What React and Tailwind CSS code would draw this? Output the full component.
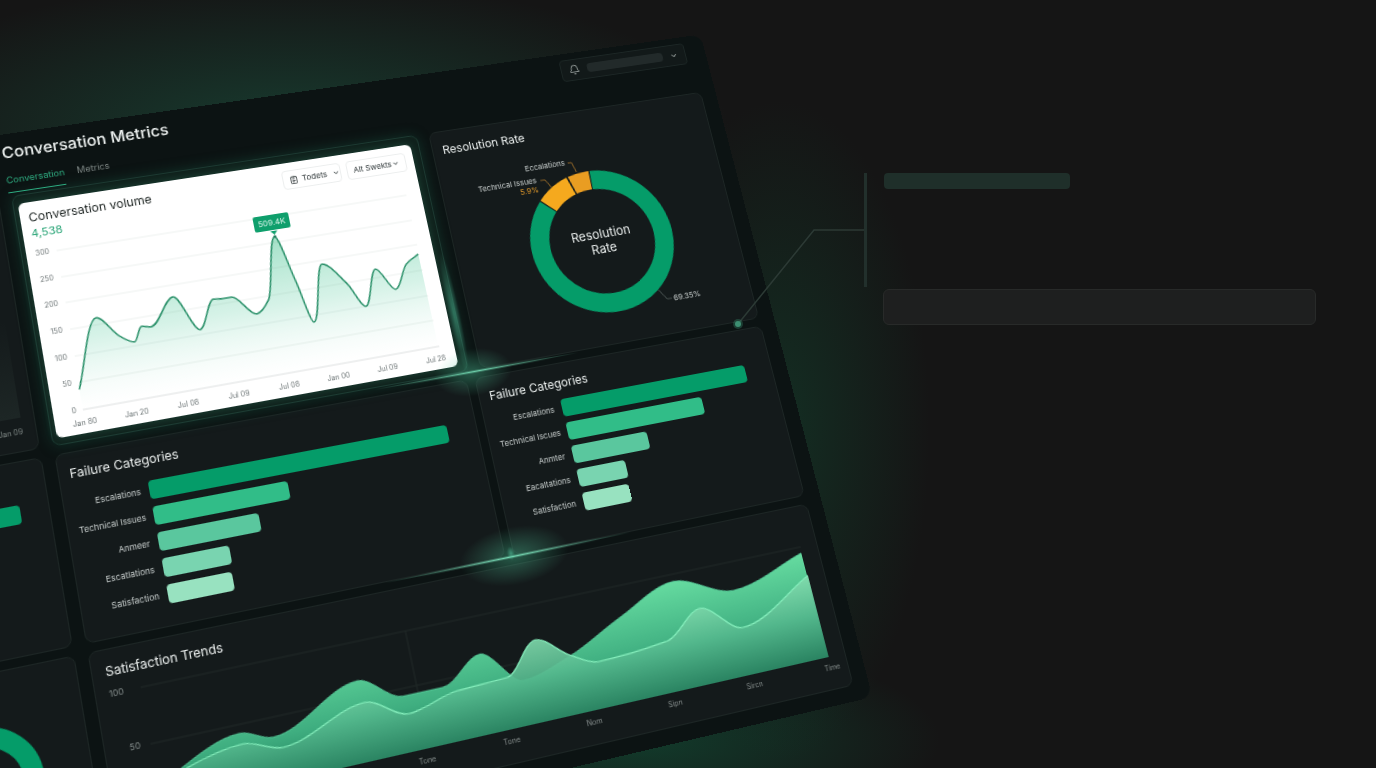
import { Bell, ChevronDown, NotepadText } from "lucide-react";

const volumePoints = [
  [33, 201], [60, 134], [79, 156], [92, 164], [101, 150], [110, 152], [136, 126],
  [156, 163], [174, 135], [183, 136], [192, 136], [213, 157], [227, 145], [245, 82],
  [257, 130], [267, 175], [286, 118], [307, 142], [321, 168], [338, 132], [354, 156],
  [370, 132], [384, 124],
];

const trendBack = [
  [30, 597], [64, 568], [123, 548], [153, 558], [240, 524], [279, 547], [318, 547],
  [360, 524], [396, 557], [446, 544], [504, 518], [565, 495], [623, 516], [702, 494],
];

const trendFront = [
  [34, 598], [71, 568], [124, 558], [160, 569], [243, 545], [281, 564], [331, 553],
  [381, 551], [416, 522], [446, 543], [472, 555], [545, 550], [585, 526], [623, 553],
  [703, 517],
];

const leftBars = [
  { label: "Escalations", width: 294, color: "#059c69" },
  { label: "Technical Issues", width: 130, color: "#31bd88" },
  { label: "Anmeer", width: 97, color: "#5ac79e" },
  { label: "Escatlations", width: 64, color: "#79d4b0" },
  { label: "Satisfaction", width: 62, color: "#98e2c0" },
];

const rightBars = [
  { label: "Escalations", width: 198, color: "#059c69" },
  { label: "Technical Iscues", width: 145, color: "#31bd88" },
  { label: "Anmter", width: 80, color: "#5ac79e" },
  { label: "Eacaltations", width: 51, color: "#79d4b0" },
  { label: "Satisfaction", width: 49, color: "#98e2c0" },
];

const volumeDates = ["Jan 80", "Jan 20", "Jul 08", "Jul 09", "Jul 08", "Jan 00", "Jul 09", "Jul 28"];
const trendTimes = ["Tone", "Tone", "Nom", "Sipn", "Sircn", "Time"];

// monotone cubic through the points
function curve(pts) {
  const n = pts.length;
  const slope = [];
  for (let i = 0; i < n - 1; i++) {
    slope.push((pts[i + 1][1] - pts[i][1]) / (pts[i + 1][0] - pts[i][0]));
  }
  const m = pts.map((_, i) => {
    if (i === 0) return slope[0];
    if (i === n - 1) return slope[n - 2];
    const a = slope[i - 1];
    const b = slope[i];
    return a * b <= 0 ? 0 : (2 * a * b) / (a + b);
  });
  let d = `M${pts[0][0]} ${pts[0][1]}`;
  for (let i = 0; i < n - 1; i++) {
    const h = (pts[i + 1][0] - pts[i][0]) / 3;
    d += ` C${pts[i][0] + h} ${pts[i][1] + m[i] * h} ${pts[i + 1][0] - h} ${pts[i + 1][1] - m[i + 1] * h} ${pts[i + 1][0]} ${pts[i + 1][1]}`;
  }
  return d;
}

function arc(cx, cy, r, from, to) {
  const pt = (deg) => {
    const a = (deg * Math.PI) / 180;
    return `${cx + r * Math.sin(a)} ${cy - r * Math.cos(a)}`;
  };
  return `M${pt(from)} A${r} ${r} 0 ${to - from > 180 ? 1 : 0} 1 ${pt(to)}`;
}

function Card({ className = "", children }) {
  return (
    <section className={`rounded-lg border border-[#1d2625] bg-[#141a1b] ${className}`}>
      {children}
    </section>
  );
}

function CardTitle({ children }) {
  return <h2 className="text-[12px] leading-4 text-[#eef2f1]">{children}</h2>;
}

function FailureCard({ bars, className, listClassName }) {
  return (
    <Card className={`px-[10px] pt-3 ${className}`}>
      <CardTitle>Failure Categories</CardTitle>
      <ul className={`flex flex-col ${listClassName}`}>
        {bars.map((bar, i) => (
          <li key={i} className="flex items-center gap-2">
            <span className="w-[62px] text-right text-[8px] leading-4 whitespace-nowrap text-[#c9cfce]">
              {bar.label}
            </span>
            <span
              className="h-[18px] rounded"
              style={{ width: bar.width, backgroundColor: bar.color }}
            />
          </li>
        ))}
      </ul>
    </Card>
  );
}

function VolumeCard() {
  return (
    <section className="relative flex-1 rounded-lg border border-[#1d3a32] bg-[#10211c] pt-2 pr-2 pb-1.5 pl-1 shadow-[0_0_14px_rgba(30,105,80,0.35)]">
      <div className="relative h-full rounded-md bg-white px-2 pt-2 shadow-[0_0_8px_rgba(60,160,125,0.3)]">
        <div className="flex items-start justify-between">
          <div>
            <h2 className="text-[12px] leading-4 text-[#1b2220]">Conversation volume</h2>
            <p className="text-[11px] leading-4 text-[#2aa577]">4,538</p>
          </div>
          <div className="flex gap-1.5">
            <label className="flex h-5 w-[60px] items-center gap-1 rounded border border-[#eceeee] px-1.5 text-[#30383a]">
              <NotepadText size={9} className="shrink-0" />
              <select
                aria-label="Order filter"
                className="w-[27px] shrink-0 appearance-none text-[8px] leading-4 outline-none"
              >
                <option>Todets</option>
              </select>
              <ChevronDown size={8} className="shrink-0" />
            </label>
            <label className="flex h-5 w-[62px] items-center justify-between rounded border border-[#eceeee] px-1.5 text-[#30383a]">
              <select
                aria-label="Week filter"
                className="w-10 shrink-0 appearance-none text-[8px] leading-4 outline-none"
              >
                <option>Alt Swekts</option>
              </select>
              <ChevronDown size={8} className="shrink-0" />
            </label>
          </div>
        </div>

        <div className="mt-[5px] flex">
          <div className="flex h-[176px] w-5 flex-col justify-between pr-1.5 text-right text-[7px] leading-4 text-[#6f7778]">
            {[300, 250, 200, 150, 100, 50, 0].map((v) => (
              <span key={v}>{v}</span>
            ))}
          </div>
          <svg viewBox="33 53 352 176" className="h-[176px] w-[352px] overflow-visible" aria-hidden="true">
            <defs>
              <linearGradient id="volume" x1="0" y1="0" x2="0" y2="1">
                <stop offset="0" stopColor="#6fd0a8" stopOpacity="0.65" />
                <stop offset="0.5" stopColor="#a4e3cb" stopOpacity="0.45" />
                <stop offset="1" stopColor="#ffffff" stopOpacity="0.2" />
              </linearGradient>
            </defs>
            <path d={`${curve(volumePoints)} V221 H33 Z`} fill="url(#volume)" />
            {[61, 88, 114, 141, 168, 194].map((y) => (
              <line key={y} x1="34" x2="385" y1={y} y2={y} stroke="#8a9a96" strokeOpacity="0.18" strokeWidth="0.8" />
            ))}
            <line x1="33" x2="385" y1="221" y2="221" stroke="#d4d8d8" strokeWidth="0.8" />
            <path d={curve(volumePoints)} fill="none" stroke="#2a9069" strokeWidth="1.500" />
            <path d="M242 76h7l-3.500 4z" fill="#0f9f6c" />
            <circle cx="245.500" cy="82" r="1.500" fill="#1d7a58" />
          </svg>
        </div>
        <div className="mr-[13px] ml-5 flex justify-between text-[7px] leading-[10px] text-[#6f7778]">
          {volumeDates.map((date, i) => (
            <span key={i} className="flex w-0 justify-center whitespace-nowrap">
              {date}
            </span>
          ))}
        </div>
        <span className="absolute top-[51px] left-[222px] h-4 w-9 rounded-xs bg-[#0f9f6c] text-center text-[8px] leading-4 text-[#d9f5ea]">
          509.4K
        </span>
      </div>
    </section>
  );
}

function ResolutionCard() {
  return (
    <Card className="w-[300px] px-[10px] pt-3">
      <CardTitle>Resolution Rate</CardTitle>
      <svg
        viewBox="433 29 276 212"
        className="h-[212px] w-[276px] overflow-visible"
        fontFamily="Inter, sans-serif"
      >
        <g fill="none" strokeWidth="20">
          <path d={arc(577, 143, 66, 3, 313)} stroke="#059c69" />
          <path d={arc(577, 143, 66, -46, -17)} stroke="#f5a91e" />
          <path d={arc(577, 143, 66, -15.5, 2)} stroke="#e99d22" />
        </g>
        <g fill="none" strokeWidth="0.8">
          <path d="M560 55h4l3 11" stroke="#b07a2c" />
          <path d="M527 69h5l5 9" stroke="#b07a2c" />
          <path d="M623 204l7 11h5" stroke="#56605e" />
        </g>
        <g fill="#c9cfce" fontSize="8">
          <text x="557" y="57" textAnchor="end">Eccalations</text>
          <text x="523" y="71" textAnchor="end">Technical Issues</text>
          <text x="523" y="81" textAnchor="end" fill="#e39a2b">5.9%</text>
          <text x="637" y="218">69.35%</text>
        </g>
        <g fill="#e8eceb" fontSize="13" textAnchor="middle">
          <text x="577" y="140">Resolution</text>
          <text x="577" y="156">Rate</text>
        </g>
      </svg>
    </Card>
  );
}

function TrendsCard() {
  return (
    <Card className="px-3 pt-3">
      <CardTitle>Satisfaction Trends</CardTitle>
      <div className="mt-1 flex">
        <div className="flex h-[120px] w-5 flex-col gap-[35px] text-[8px] leading-4 text-[#868e8d]">
          <span>100</span>
          <span className="text-right">50</span>
        </div>
        <svg viewBox="33 480 670 120" className="h-[120px] w-[670px] overflow-visible" aria-hidden="true">
          <defs>
            <linearGradient id="back" gradientUnits="userSpaceOnUse" x1="0" y1="495" x2="0" y2="599">
              <stop offset="0" stopColor="#65dba0" />
              <stop offset="0.6" stopColor="#3fae80" />
              <stop offset="1" stopColor="#22805c" />
            </linearGradient>
            <linearGradient id="front" gradientUnits="userSpaceOnUse" x1="0" y1="515" x2="0" y2="599">
              <stop offset="0" stopColor="#86deb0" />
              <stop offset="0.5" stopColor="#54b88d" />
              <stop offset="1" stopColor="#2b8462" />
            </linearGradient>
          </defs>
          <g fill="none" stroke="#252d2b" strokeWidth="0.8">
            <path d="M42 488H703" />
            <path d="M42 540H420" />
            <path d="M294 488V547" />
          </g>
          <path d={`${curve(trendBack)} V599 H30 Z`} fill="url(#back)" />
          <path d={curve(trendBack)} fill="none" stroke="#56cf9c" strokeWidth="0.8" />
          <path d={`${curve(trendFront)} V599 H34 Z`} fill="url(#front)" fillOpacity="0.92" />
          <path d={curve(trendFront)} fill="none" stroke="#86efbd" strokeWidth="1.200" />
        </svg>
      </div>
      <div className="mr-1 ml-[277px] flex justify-between text-[7px] leading-5 text-[#868e8d]">
        {trendTimes.map((time, i) => (
          <span key={i} className="flex w-0 justify-center whitespace-nowrap">
            {time}
          </span>
        ))}
      </div>
    </Card>
  );
}

function Board() {
  return (
    <div className="relative w-[957px] shrink-0 origin-top-left rounded-xl bg-[#0c1313] pt-[7px] pr-4 pb-[15px] pl-5 [transform:matrix3d(1.04383,-0.13303,0,0.00012413,0.16002,0.94011,0,-0.00012123,0,0,1,0,11,196,0,1)_translate(-220px,-64px)]">
      <header>
        <div className="flex h-6 items-center justify-between pr-1.5 pl-[198px]">
          <h1 className="text-base leading-6 font-medium text-[#eef2f1]">Conversation Metrics</h1>
          <div className="flex h-6 w-[140px] items-center gap-2 rounded-sm border border-[#1c2625] bg-[#121919] px-2">
            <button aria-label="Notifications" className="text-[#b9c0be]">
              <Bell size={12} strokeWidth={1.5} />
            </button>
            <span className="h-2.5 flex-1 rounded-sm bg-[#222a2a]" />
            <button aria-label="Account menu" className="text-[#9aa2a0]">
              <ChevronDown size={9} />
            </button>
          </div>
        </div>
        <nav className="flex h-[33px] items-end gap-3 pb-[3px] pl-[198px] text-[9px] leading-3" role="tablist">
          <button role="tab" aria-selected="true" className="border-b border-[#2fb487] pb-1.5 text-[#2fae82]">
            Conversation
          </button>
          <button role="tab" aria-selected="false" className="border-b border-transparent pb-1.5 text-[#7f8886]">
            Metrics
          </button>
        </nav>
      </header>

      <main className="grid grid-cols-[188px_1fr] grid-rows-[252px_180px_184px] gap-x-3 gap-y-2">
        <Card className="flex flex-col items-end justify-end gap-2 px-3 pb-3">
          <div className="h-24 w-full bg-linear-to-b from-transparent to-[#1d2625]" />
          <span className="text-[7px] leading-3 text-[#7f8886]">Jan 09</span>
        </Card>
        <div className="flex gap-3">
          <VolumeCard />
          <ResolutionCard />
        </div>

        <Card className="px-[26px] pt-10">
          <div className="h-[18px] rounded bg-[#059c69]" />
        </Card>
        <div className="flex gap-2">
          <FailureCard bars={leftBars} className="flex-1" listClassName="mt-3 gap-[7px]" />
          <FailureCard bars={rightBars} className="w-[308px]" listClassName="mt-2 gap-1.5" />
        </div>

        <Card className="flex justify-center pt-[46px]">
          <div className="size-[102px] shrink-0 rounded-full border-[18px] border-[#059c69]" />
        </Card>
        <TrendsCard />
      </main>

      {/* light leaking through the gaps */}
      <div className="pointer-events-none absolute top-[294px] left-[593px] h-12 w-20 bg-[radial-gradient(closest-side,rgba(80,200,155,0.4),transparent)]" />
      <div className="pointer-events-none absolute top-[316px] left-[533px] h-[3px] w-[210px] bg-[radial-gradient(closest-side,rgba(120,225,185,0.9),transparent)]" />
      <div className="pointer-events-none absolute top-[190px] left-[621px] h-[130px] w-3 bg-[radial-gradient(closest-side,rgba(70,175,140,0.6),transparent)]" />
      <div className="pointer-events-none absolute top-[476px] left-[579px] h-14 w-[110px] bg-[radial-gradient(closest-side,rgba(80,200,155,0.4),transparent)]" />
      <div className="pointer-events-none absolute top-[503px] left-[504px] h-[3px] w-[250px] bg-[radial-gradient(closest-side,rgba(130,235,195,0.9),transparent)]" />
      <div className="pointer-events-none absolute top-[440px] left-[627px] h-[68px] w-2 bg-[radial-gradient(closest-side_at_50%_90%,rgba(90,210,170,0.5),transparent)]" />
    </div>
  );
}

export default function App() {
  return (
    <div className="flex h-screen items-start overflow-hidden bg-[#151515] bg-[radial-gradient(ellipse_440px_150px_at_290px_130px,rgba(26,84,64,0.6),transparent),radial-gradient(ellipse_150px_330px_at_780px_430px,rgba(18,70,48,0.5),transparent),radial-gradient(ellipse_300px_100px_at_640px_740px,rgba(16,84,58,0.6),transparent)] font-[Inter,sans-serif]">
      <div className="w-[63%] min-w-0">
        <Board />
      </div>

      <aside className="relative flex-1 pt-[173px] pr-[60px]">
        <div className="relative ml-[-3px] h-[114px] border-l-[3px] border-[#22302c] pl-[17px]">
          <div className="h-4 w-[186px] rounded-sm bg-[#1f2f2a]" />
        </div>
        <div className="mt-0.5 ml-4 h-9 rounded-md border border-[#282a29] bg-[#1e1f1f]" />
        <svg
          viewBox="0 0 134 104"
          className="absolute top-[226px] right-full h-[104px] w-[134px]"
          fill="none"
          aria-hidden="true"
        >
          <path d="M5 98L81 4H131" stroke="#2c3a35" strokeWidth="1.500" />
          <circle cx="5" cy="98" r="5" fill="#3f9f7c" fillOpacity="0.3" />
          <circle cx="5" cy="98" r="3" fill="#3d8f72" />
        </svg>
      </aside>
    </div>
  );
}
